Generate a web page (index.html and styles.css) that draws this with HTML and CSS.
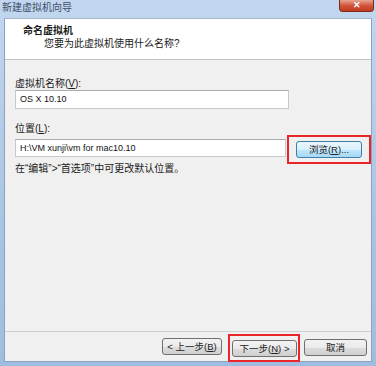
FILE: index.html
```html
<!doctype html>
<html>
  <head>
    <meta charset="utf-8">
    <title>新建虚拟机向导</title>
    <link rel="stylesheet" href="styles.css">
  </head>
  <body>
    <div class="window">
      <div class="titlebar">
        <span class="title">新建虚拟机向导</span>
        <span class="close">&#x2715;</span>
      </div>
      <div class="client">
        <div class="header">
          <div class="heading">命名虚拟机</div>
          <div class="subheading">您要为此虚拟机使用什么名称?</div>
        </div>
        <div class="body">
          <div class="label">虚拟机名称(<u>V</u>):</div>
          <div class="input name">OS X 10.10</div>
          <div class="label loc">位置(<u>L</u>):</div>
          <div class="row">
            <div class="input path">H:\VM xunji\vm for mac10.10</div>
            <div class="mark browse-mark">
              <span class="btn browse">浏览(<u>R</u>)...</span>
            </div>
          </div>
          <div class="hint">在“编辑”&gt;“首选项”中可更改默认位置。</div>
        </div>
        <div class="footer">
          <span class="btn back">&lt; 上一步(<u>B</u>)</span>
          <div class="mark next-mark">
            <span class="btn next">下一步(<u>N</u>) &gt;</span>
          </div>
          <span class="btn cancel">取消</span>
        </div>
      </div>
    </div>
  </body>
</html>
```
FILE: styles.css
```css
html, body {
  margin: 0;
  padding: 0;
}

body {
  width: 376px;
  height: 366px;
  overflow: hidden;
  font-family: "Liberation Sans", "Noto Sans CJK SC", sans-serif;
  font-size: 10px;
  color: #1a1a1a;
}

.window {
  width: 376px;
  height: 366px;
  display: flex;
  flex-direction: column;
  background: linear-gradient(to bottom, #c2d7ef, #a9c4e4 60%, #9fbde0);
}

.titlebar {
  height: 18px;
  display: flex;
  justify-content: space-between;
  align-items: flex-start;
  padding-left: 2px;
  padding-right: 2px;
}

.title {
  color: #3d4f66;
  line-height: 16px;
  font-size: 10px;
}

.close {
  width: 35px;
  height: 12px;
  border: 1px solid #7a2a1c;
  border-top: 0;
  border-radius: 0 0 4px 4px;
  background: linear-gradient(to bottom, #e8a393, #d2553b 50%, #c23a1d);
  color: #fff;
  font-size: 9px;
  font-weight: bold;
  line-height: 11px;
  text-align: center;
  box-sizing: border-box;
}

.client {
  flex: 1;
  margin: 0 4px 4px 4px;
  display: flex;
  flex-direction: column;
  background: #f0f0f0;
  border: 1px solid #8da2bd;
  border-top-color: #a3b6cc;
}

.header {
  height: 41px;
  background: #fff;
  border-bottom: 1px solid #c2c2c2;
  box-sizing: border-box;
  padding-top: 5px;
}

.heading {
  font-weight: bold;
  margin-left: 18px;
  line-height: 13px;
}

.subheading {
  margin-left: 39px;
  line-height: 13px;
}

.body {
  flex: 1;
  padding: 17px 0 0 10px;
  border-bottom: 1px solid #d0d0d0;
}

.label {
  line-height: 13px;
}

.label.loc {
  margin-top: 13px;
}

.input {
  background: #fff;
  border: 1px solid #c6c9ce;
  border-top-color: #abadb3;
  box-sizing: border-box;
  font-size: 9px;
  padding-left: 4px;
  line-height: 16px;
  color: #111;
}

.input.name {
  width: 274px;
  height: 19px;
  line-height: 17px;
}

.row {
  display: flex;
  align-items: center;
  margin-top: 0;
}

.input.path {
  width: 271px;
  height: 18px;
  margin-top: -3px;
}

.mark {
  border: 2px solid #e8262a;
  box-sizing: border-box;
}

.browse-mark {
  margin-left: 1px;
  padding: 4px 7px;
  margin-top: 0;
}

.btn {
  display: inline-block;
  height: 17px;
  line-height: 15px;
  border: 1px solid #707070;
  border-radius: 3px;
  box-sizing: border-box;
  background: linear-gradient(to bottom, #f2f2f2, #ebebeb 50%, #dddddd 51%, #cfcfcf);
  text-align: center;
  color: #222;
  font-size: 9.5px;
  vertical-align: top;
}

.btn.browse {
  width: 66px;
  border-color: #3c7fb1;
  background: linear-gradient(to bottom, #eaf6fd, #d9f0fc 50%, #bee6fd 51%, #a7d9f5);
}

.hint {
  line-height: 12px;
  margin-top: -1px;
}

.footer {
  height: 29px;
  display: flex;
  align-items: center;
  justify-content: flex-end;
  padding-right: 4px;
}

.btn.back {
  width: 60px;
}

.next-mark {
  margin-left: 6px;
  margin-top: 2px;
  padding: 4px 1px 3px 2px;
}

.btn.next {
  width: 65px;
}

.btn.cancel {
  width: 63px;
  margin-left: 4px;
  margin-top: 1px;
}

u {
  text-decoration: underline;
}
```
